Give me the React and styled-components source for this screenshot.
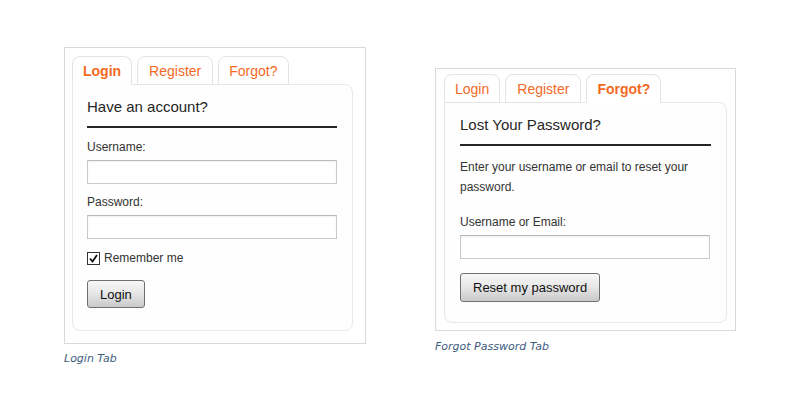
import React from 'react';
import styled, { createGlobalStyle } from 'styled-components';

const GlobalStyle = createGlobalStyle`
  * { box-sizing: border-box; }
  body {
    margin: 0;
    background: #ffffff;
    font-family: "Liberation Sans", Arial, sans-serif;
  }
`;

const Page = styled.div`
  width: 800px;
  height: 400px;
  padding: 47px 0 0 64px;
  display: flex;
  align-items: flex-start;
  gap: 69px;
`;

const Figure = styled.figure`
  margin: ${({ $offset }) => $offset || 0}px 0 0 0;
  display: flex;
  flex-direction: column;
`;

const Frame = styled.div`
  width: ${({ $width }) => $width}px;
  padding: ${({ $pad }) => $pad};
  border: 1px solid #d9d9d9;
  background: #ffffff;
`;

const Caption = styled.figcaption`
  margin-top: ${({ $gap }) => $gap}px;
  font-family: "DejaVu Sans", Verdana, sans-serif;
  font-style: italic;
  font-size: 11px;
  line-height: 14px;
  color: #3d5c7e;
`;

const TabBar = styled.div`
  display: flex;
  gap: 5px;
  position: relative;
  z-index: 1;
`;

const Tab = styled.div`
  height: 29px;
  padding: 0 ${({ $pad }) => $pad}px;
  display: flex;
  align-items: center;
  margin-bottom: -1px;
  border: 1px solid #e4e4e4;
  border-bottom-color: ${({ $active }) => ($active ? '#ffffff' : '#e4e4e4')};
  border-radius: 8px 8px 0 0;
  background: #ffffff;
  font-size: 14px;
  font-weight: ${({ $active }) => ($active ? 'bold' : 'normal')};
  color: #f36a1f;
`;

const Panel = styled.div`
  width: ${({ $width }) => $width}px;
  padding: 13px 15px ${({ $bottom }) => $bottom}px ${({ $left }) => $left}px;
  border: 1px solid #e8e8e8;
  border-radius: 0 8px 8px 8px;
  background: #fefefe;
`;

const Heading = styled.h3`
  margin: 0;
  padding-bottom: 10px;
  border-bottom: 2px solid #262626;
  font-size: 15px;
  font-weight: normal;
  line-height: 18px;
  color: #262626;
`;

const Intro = styled.p`
  margin: 11px 0 0 0;
  font-size: 12px;
  line-height: 20px;
  color: #333333;
`;

const Field = styled.div`
  margin-top: ${({ $gap }) => $gap}px;
  display: flex;
  flex-direction: column;
  gap: 5px;
`;

const Label = styled.label`
  font-size: 12px;
  line-height: 15px;
  color: #333333;
`;

const Input = styled.input`
  width: 250px;
  height: 24px;
  margin: 0;
  border: 1px solid #c9c9c9;
  border-top-color: #b9b9b9;
  box-shadow: inset 0 1px 2px rgba(0, 0, 0, 0.06);
  background: #ffffff;
  outline: none;
`;

const CheckRow = styled.label`
  margin-top: 12px;
  display: flex;
  align-items: center;
  gap: 4px;
  font-size: 12px;
  line-height: 15px;
  color: #333333;
`;

const CheckBox = styled.span`
  width: 13px;
  height: 13px;
  border: 1px solid #333333;
  background: #ffffff;
  display: flex;
  align-items: center;
  justify-content: center;
`;

const Button = styled.button`
  margin-top: ${({ $gap }) => $gap}px;
  align-self: flex-start;
  height: ${({ $height }) => $height || 28}px;
  padding: 0 12px;
  border: 1px solid #707070;
  border-radius: 3px;
  background: linear-gradient(#f7f7f7, #e8e8e8 45%, #c9c9c9);
  font-family: "Liberation Sans", Arial, sans-serif;
  font-size: 13px;
  color: #111111;
`;

const Form = styled.div`
  display: flex;
  flex-direction: column;
`;

const Tabs = ({ active, pads }) => (
  <TabBar>
    {['Login', 'Register', 'Forgot?'].map((name, i) => (
      <Tab key={name} $active={name === active} $pad={pads[i]}>
        {name}
      </Tab>
    ))}
  </TabBar>
);

const Check = () => (
  <CheckBox>
    <svg width="9" height="9" viewBox="0 0 9 9">
      <path d="M1 4.5 L3.5 7.5 L8 1" fill="none" stroke="#111" strokeWidth="1.8" />
    </svg>
  </CheckBox>
);

const App = () => (
  <>
    <GlobalStyle />
    <Page>
      <Figure>
        <Frame $width={302} $pad="8px 12px 12px 7px">
          <Tabs active="Login" pads={[10, 11, 10]} />
          <Panel $width={281} $bottom={22} $left={14}>
            <Heading>Have an account?</Heading>
            <Form>
              <Field $gap={12}>
                <Label>Username:</Label>
                <Input />
              </Field>
              <Field $gap={11}>
                <Label>Password:</Label>
                <Input type="password" />
              </Field>
              <CheckRow>
                <Check />
                Remember me
              </CheckRow>
              <Button $gap={14}>Login</Button>
            </Form>
          </Panel>
        </Frame>
        <Caption $gap={8}>Login Tab</Caption>
      </Figure>

      <Figure $offset={21}>
        <Frame $width={301} $pad="5px 8px 7px 8px">
          <Tabs active="Forgot?" pads={[10, 11, 10]} />
          <Panel $width={283} $bottom={20} $left={15}>
            <Heading>Lost Your Password?</Heading>
            <Intro>Enter your username or email to reset your password.</Intro>
            <Form>
              <Field $gap={18}>
                <Label>Username or Email:</Label>
                <Input />
              </Field>
              <Button $gap={14} $height={29}>Reset my password</Button>
            </Form>
          </Panel>
        </Frame>
        <Caption $gap={9}>Forgot Password Tab</Caption>
      </Figure>
    </Page>
  </>
);

export default App;
